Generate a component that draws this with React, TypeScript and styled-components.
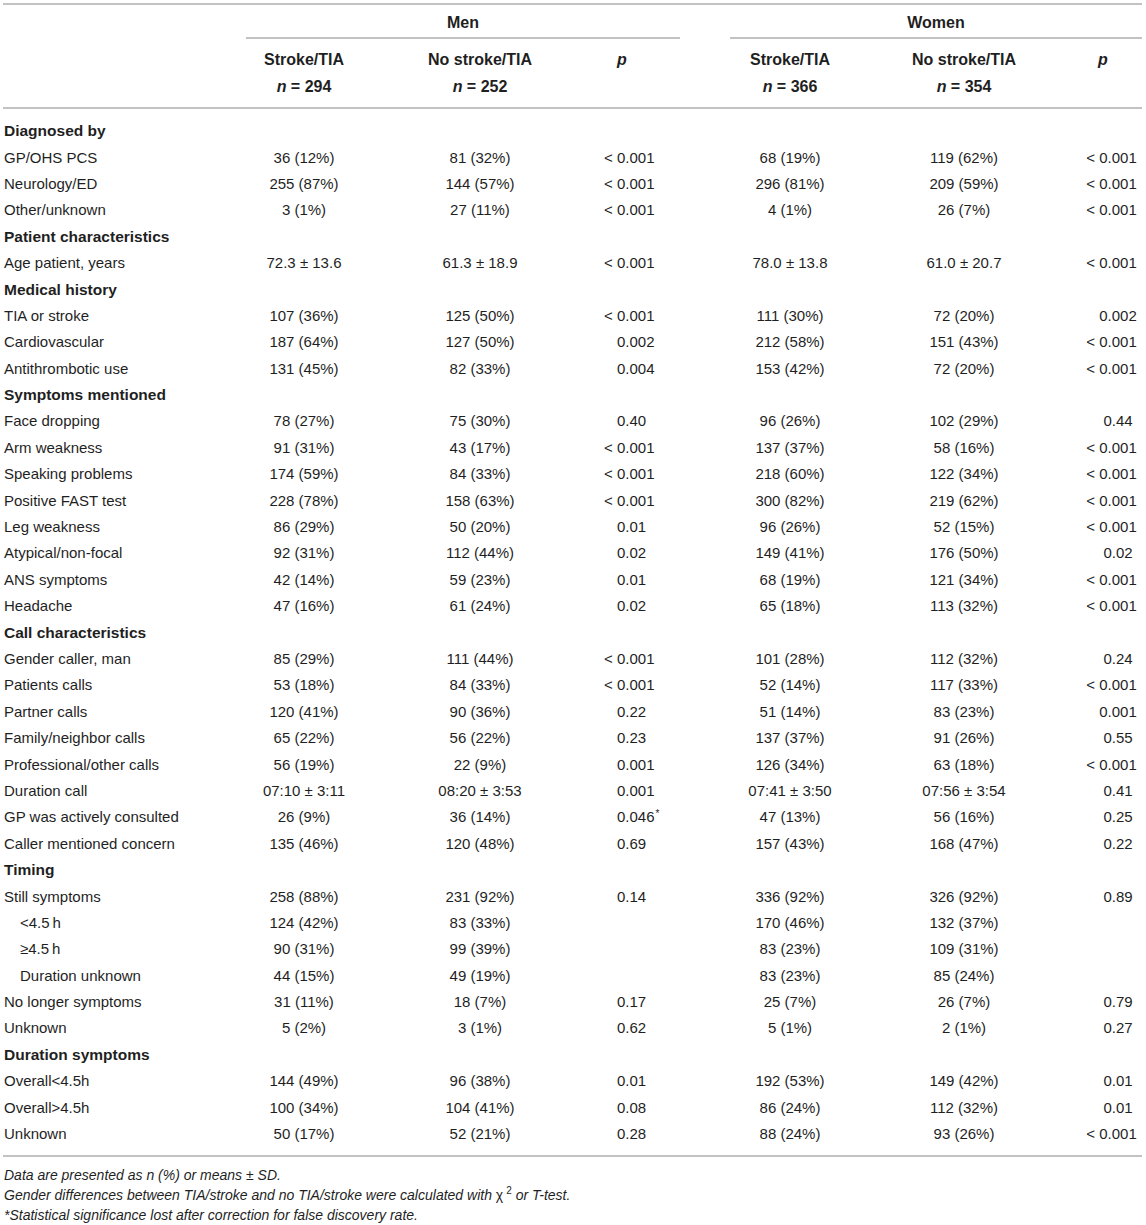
import React from "react";
import styled, { createGlobalStyle, css } from "styled-components";

const Global = createGlobalStyle`
  html, body { margin: 0; padding: 0; background: #ffffff; }
  body { font-family: "Liberation Sans", Arial, Helvetica, sans-serif; color: #1f1f1f; }
`;

const RULE = "#c2c2c2";

const cols = css`
  display: grid;
  grid-template-columns: 243px 116px 236px 82px 50px 120px 228px 64px;
`;

const Page = styled.div`
  padding: 3px 0 0 3px;
  width: 1139px;
`;

const Table = styled.div`
  border-top: 2px solid ${RULE};
  border-bottom: 2px solid ${RULE};
`;

const GroupRow = styled.div`
  ${cols};
  height: 36px;
`;

const GroupCell = styled.div<{ $start: number }>`
  grid-column: ${(p) => p.$start} / span 3;
  height: 34px;
  box-sizing: border-box;
  padding-top: 3px;
  border-bottom: 2px solid ${RULE};
  display: flex;
  align-items: center;
  justify-content: center;
  font-weight: 700;
  font-size: 16px;
`;

const SubHeadRow = styled.div`
  ${cols};
  padding: 5px 0 7px;
  border-bottom: 2px solid ${RULE};
`;

const HeadCell = styled.div<{ $align?: "center" | "left"; $pad?: number }>`
  font-weight: 700;
  font-size: 16px;
  line-height: 27px;
  text-align: ${(p) => p.$align ?? "center"};
  padding-left: ${(p) => p.$pad ?? 0}px;
  white-space: nowrap;
`;

const HeadLine = styled.div`
  display: block;
`;

const Body = styled.div`
  padding: 9px 0 8px;
`;

const Row = styled.div`
  ${cols};
  height: 26.4px;
  align-items: center;
  font-size: 15px;
  line-height: 18px;
`;

const SectionRow = styled.div`
  height: 26.4px;
  display: flex;
  align-items: center;
  padding-left: 1px;
  font-weight: 700;
  font-size: 15.5px;
`;

const Label = styled.div<{ $indent?: boolean }>`
  padding-left: ${(p) => (p.$indent ? 17 : 1)}px;
  white-space: nowrap;
`;

const Value = styled.div<{ $col: number }>`
  grid-column: ${(p) => p.$col};
  text-align: center;
  white-space: nowrap;
`;

const PCell = styled.div<{ $col: number; $women?: boolean }>`
  grid-column: ${(p) => p.$col};
  display: grid;
  grid-template-columns: ${(p) =>
    p.$women ? "minmax(0,1fr) auto minmax(0,1fr)" : "19px auto minmax(0,1fr)"};
  padding-left: ${(p) => (p.$women ? 16 : 0)}px;
  white-space: nowrap;
`;

const Prefix = styled.span`
  justify-self: end;
  white-space: pre;
`;

const Num = styled.span`
  white-space: nowrap;
`;

const Star = styled.sup`
  font-size: 10px;
  vertical-align: 5px;
  line-height: 0;
  margin-left: 1px;
`;

const Sup = styled.sup`
  font-size: 10px;
  vertical-align: 6px;
  line-height: 0;
  margin-left: 3px;
`;

const Italic = styled.i`
  font-style: italic;
`;

const Notes = styled.div`
  padding: 8px 0 0 1px;
  font-size: 14px;
  line-height: 20px;
  font-style: italic;
`;

const Upright = styled.span`
  font-style: normal;
`;

type DataRow = {
  label: string;
  indent?: boolean;
  v: [string, string, string, string, string, string];
};
type Item = { section: string } | DataRow;

const items: Item[] = [
  { section: "Diagnosed by" },
  { label: "GP/OHS PCS", v: ["36 (12%)", "81 (32%)", "< 0.001", "68 (19%)", "119 (62%)", "< 0.001"] },
  { label: "Neurology/ED", v: ["255 (87%)", "144 (57%)", "< 0.001", "296 (81%)", "209 (59%)", "< 0.001"] },
  { label: "Other/unknown", v: ["3 (1%)", "27 (11%)", "< 0.001", "4 (1%)", "26 (7%)", "< 0.001"] },
  { section: "Patient characteristics" },
  { label: "Age patient, years", v: ["72.3 ± 13.6", "61.3 ± 18.9", "< 0.001", "78.0 ± 13.8", "61.0 ± 20.7", "< 0.001"] },
  { section: "Medical history" },
  { label: "TIA or stroke", v: ["107 (36%)", "125 (50%)", "< 0.001", "111 (30%)", "72 (20%)", "0.002"] },
  { label: "Cardiovascular", v: ["187 (64%)", "127 (50%)", "0.002", "212 (58%)", "151 (43%)", "< 0.001"] },
  { label: "Antithrombotic use", v: ["131 (45%)", "82 (33%)", "0.004", "153 (42%)", "72 (20%)", "< 0.001"] },
  { section: "Symptoms mentioned" },
  { label: "Face dropping", v: ["78 (27%)", "75 (30%)", "0.40", "96 (26%)", "102 (29%)", "0.44"] },
  { label: "Arm weakness", v: ["91 (31%)", "43 (17%)", "< 0.001", "137 (37%)", "58 (16%)", "< 0.001"] },
  { label: "Speaking problems", v: ["174 (59%)", "84 (33%)", "< 0.001", "218 (60%)", "122 (34%)", "< 0.001"] },
  { label: "Positive FAST test", v: ["228 (78%)", "158 (63%)", "< 0.001", "300 (82%)", "219 (62%)", "< 0.001"] },
  { label: "Leg weakness", v: ["86 (29%)", "50 (20%)", "0.01", "96 (26%)", "52 (15%)", "< 0.001"] },
  { label: "Atypical/non-focal", v: ["92 (31%)", "112 (44%)", "0.02", "149 (41%)", "176 (50%)", "0.02"] },
  { label: "ANS symptoms", v: ["42 (14%)", "59 (23%)", "0.01", "68 (19%)", "121 (34%)", "< 0.001"] },
  { label: "Headache", v: ["47 (16%)", "61 (24%)", "0.02", "65 (18%)", "113 (32%)", "< 0.001"] },
  { section: "Call characteristics" },
  { label: "Gender caller, man", v: ["85 (29%)", "111 (44%)", "< 0.001", "101 (28%)", "112 (32%)", "0.24"] },
  { label: "Patients calls", v: ["53 (18%)", "84 (33%)", "< 0.001", "52 (14%)", "117 (33%)", "< 0.001"] },
  { label: "Partner calls", v: ["120 (41%)", "90 (36%)", "0.22", "51 (14%)", "83 (23%)", "0.001"] },
  { label: "Family/neighbor calls", v: ["65 (22%)", "56 (22%)", "0.23", "137 (37%)", "91 (26%)", "0.55"] },
  { label: "Professional/other calls", v: ["56 (19%)", "22 (9%)", "0.001", "126 (34%)", "63 (18%)", "< 0.001"] },
  { label: "Duration call", v: ["07:10 ± 3:11", "08:20 ± 3:53", "0.001", "07:41 ± 3:50", "07:56 ± 3:54", "0.41"] },
  { label: "GP was actively consulted", v: ["26 (9%)", "36 (14%)", "0.046*", "47 (13%)", "56 (16%)", "0.25"] },
  { label: "Caller mentioned concern", v: ["135 (46%)", "120 (48%)", "0.69", "157 (43%)", "168 (47%)", "0.22"] },
  { section: "Timing" },
  { label: "Still symptoms", v: ["258 (88%)", "231 (92%)", "0.14", "336 (92%)", "326 (92%)", "0.89"] },
  { label: "<4.5\u2009h", indent: true, v: ["124 (42%)", "83 (33%)", "", "170 (46%)", "132 (37%)", ""] },
  { label: "≥4.5\u2009h", indent: true, v: ["90 (31%)", "99 (39%)", "", "83 (23%)", "109 (31%)", ""] },
  { label: "Duration unknown", indent: true, v: ["44 (15%)", "49 (19%)", "", "83 (23%)", "85 (24%)", ""] },
  { label: "No longer symptoms", v: ["31 (11%)", "18 (7%)", "0.17", "25 (7%)", "26 (7%)", "0.79"] },
  { label: "Unknown", v: ["5 (2%)", "3 (1%)", "0.62", "5 (1%)", "2 (1%)", "0.27"] },
  { section: "Duration symptoms" },
  { label: "Overall<4.5h", v: ["144 (49%)", "96 (38%)", "0.01", "192 (53%)", "149 (42%)", "0.01"] },
  { label: "Overall>4.5h", v: ["100 (34%)", "104 (41%)", "0.08", "86 (24%)", "112 (32%)", "0.01"] },
  { label: "Unknown", v: ["50 (17%)", "52 (21%)", "0.28", "88 (24%)", "93 (26%)", "< 0.001"] },
];

function PValue({ value, col, women }: { value: string; col: number; women?: boolean }) {
  const lt = value.startsWith("< ");
  const core = lt ? value.slice(2) : value;
  const star = core.endsWith("*");
  const num = star ? core.slice(0, -1) : core;
  return (
    <PCell $col={col} $women={women}>
      <Prefix>{lt ? "< " : ""}</Prefix>
      <Num>
        {num}
        {star && <Star>*</Star>}
      </Num>
      <span />
    </PCell>
  );
}

function NHead({ label, n }: { label: string; n: string }) {
  return (
    <HeadCell>
      <HeadLine>{label}</HeadLine>
      <HeadLine>
        <Italic>n</Italic> = {n}
      </HeadLine>
    </HeadCell>
  );
}

export default function App() {
  return (
    <Page>
      <Global />
      <Table>
        <GroupRow>
          <GroupCell $start={2}>Men</GroupCell>
          <GroupCell $start={6}>Women</GroupCell>
        </GroupRow>
        <SubHeadRow>
          <div />
          <NHead label="Stroke/TIA" n="294" />
          <NHead label="No stroke/TIA" n="252" />
          <HeadCell $align="left" $pad={19}>
            <Italic>p</Italic>
          </HeadCell>
          <div />
          <NHead label="Stroke/TIA" n="366" />
          <NHead label="No stroke/TIA" n="354" />
          <HeadCell $align="left" $pad={20}>
            <Italic>p</Italic>
          </HeadCell>
        </SubHeadRow>
        <Body>
          {items.map((it, i) =>
            "section" in it ? (
              <SectionRow key={i}>{it.section}</SectionRow>
            ) : (
              <Row key={i}>
                <Label $indent={it.indent}>{it.label}</Label>
                <Value $col={2}>{it.v[0]}</Value>
                <Value $col={3}>{it.v[1]}</Value>
                <PValue col={4} value={it.v[2]} />
                <Value $col={6}>{it.v[3]}</Value>
                <Value $col={7}>{it.v[4]}</Value>
                <PValue col={8} value={it.v[5]} women />
              </Row>
            )
          )}
        </Body>
      </Table>
      <Notes>
        <div>Data are presented as n (%) or means ± SD.</div>
        <div>
          Gender differences between TIA/stroke and no TIA/stroke were calculated with{" "}
          <Upright>
            χ<Sup>2</Sup>
          </Upright>{" "}
          or T-test.
        </div>
        <div>*Statistical significance lost after correction for false discovery rate.</div>
      </Notes>
    </Page>
  );
}
